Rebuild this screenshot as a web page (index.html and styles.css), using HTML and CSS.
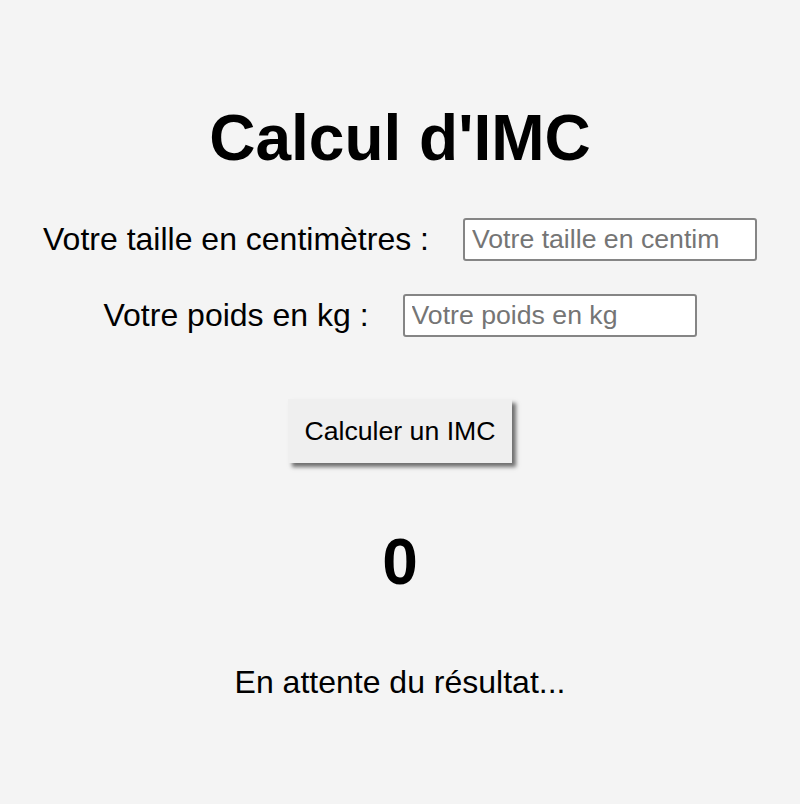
FILE: index.html
```html
<!DOCTYPE html>
<html lang="fr">
<head>
<meta charset="utf-8">
<title>Calcul d'IMC</title>
<link rel="stylesheet" href="styles.css">
</head>
<body>
<main class="app">
  <h1 class="title">Calcul d'IMC</h1>
  <div class="field">
    <label class="label" for="taille">Votre taille en centimètres :</label>
    <input class="input" id="taille" type="text" placeholder="Votre taille en centim">
  </div>
  <div class="field">
    <label class="label" for="poids">Votre poids en kg :</label>
    <input class="input" id="poids" type="text" placeholder="Votre poids en kg">
  </div>
  <button class="btn" type="button">Calculer un IMC</button>
  <div class="result">0</div>
  <p class="status">En attente du résultat...</p>
</main>
</body>
</html>
```

FILE: styles.css
```css
html, body {
  margin: 0;
  padding: 0;
  background: #f4f4f4;
}
body {
  font-family: "Liberation Sans", Arial, sans-serif;
  color: #000;
}
.app {
  display: flex;
  flex-direction: column;
  align-items: center;
  padding-top: 98px;
}
.title {
  margin: 0;
  font-size: 64px;
  font-weight: bold;
  line-height: 80px;
}
.field {
  display: flex;
  align-items: center;
  gap: 34px;
  margin-top: 40px;
}
.field + .field {
  margin-top: 33px;
}
.label {
  font-size: 32px;
}
.input {
  box-sizing: border-box;
  width: 294px;
  height: 43px;
  border: 2px solid #858585;
  border-radius: 3px;
  background: #fff;
  padding: 0 7px;
  font-family: inherit;
  font-size: 26.67px;
}
.input::placeholder {
  color: #757575;
}
.btn {
  margin-top: 62px;
  width: 224px;
  height: 64px;
  padding: 0;
  border: none;
  background: #efefef;
  box-shadow: 4px 4px 4px #6f6f6f;
  font-family: inherit;
  font-size: 26.67px;
  color: #000;
}
.result {
  margin-top: 67px;
  font-size: 64px;
  font-weight: bold;
  line-height: 64px;
}
.status {
  margin: 70px 0 0;
  font-size: 32px;
}
```
